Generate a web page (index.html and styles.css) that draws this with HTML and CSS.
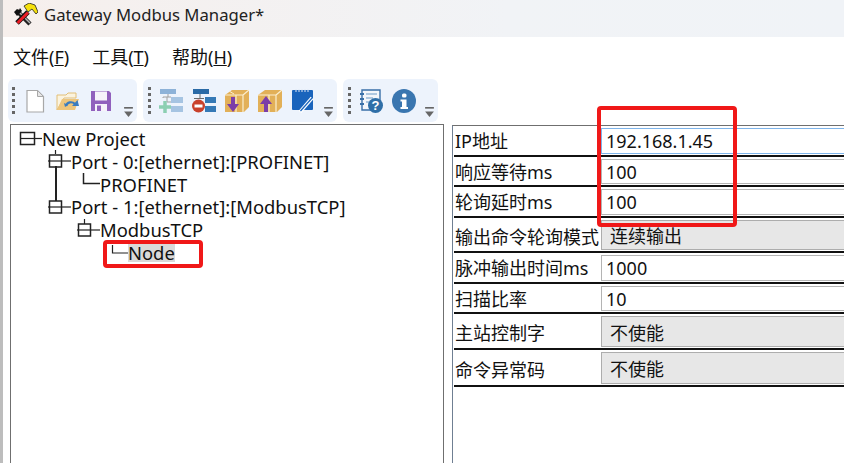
FILE: index.html
```html
<!DOCTYPE html>
<html lang="zh">
<head>
<meta charset="utf-8">
<title>Gateway Modbus Manager*</title>
<link rel="stylesheet" href="styles.css">
</head>
<body>
<div class="app">
  <header class="titlebar">
    <svg class="appicon" width="24" height="24" viewBox="0 0 24 24">
      <path d="M3 8L16 21" stroke="#222" stroke-width="4.500"/>
      <path d="M5 9L16 20" stroke="#b5b5b5" stroke-width="1.500"/>
      <path d="M0 9L3 6L5 7L6 5L8 8L3 13Z" fill="#111"/>
      <path d="M3 20L14 9" stroke="#111" stroke-width="5"/>
      <path d="M3.500 20L14 9.500" stroke="#ea1c24" stroke-width="3"/>
      <path d="M10 3L15 0L21 2L24 9L22 11L18 6L14 9Z" fill="#f5e00c" stroke="#222" stroke-width=".8"/>
    </svg>
    <span class="title">Gateway Modbus Manager*</span>
  </header>
  <nav class="menu">
    <span class="menu-item">文件(<u>F</u>)</span>
    <span class="menu-item">工具(<u>T</u>)</span>
    <span class="menu-item">帮助(<u>H</u>)</span>
  </nav>
  <div class="toolbars">
    <div class="toolbar tb1">
      <i class="grip"></i>
      <svg class="ic" viewBox="0 0 24 24"><path d="M4 1.500H14.500L20.500 7.500V23H4Z" fill="#fff" stroke="#a8a8a8" stroke-width="1.200"/><path d="M14.500 1.500V7.500H20.500Z" fill="#e6e6e6" stroke="#a8a8a8"/></svg>
      <svg class="ic" viewBox="0 0 24 24"><path d="M1 21V6H10L12 4H20V9H8L1 21Z" fill="#fbf3df" stroke="#e2bf78"/><path d="M1 21L6 10H23L19 21Z" fill="#eec67d"/><path d="M10 17C11 13 16 12 19 15" fill="none" stroke="#3a7cc0" stroke-width="2.200"/><path d="M16 17H23L21.500 11Z" fill="#3a7cc0"/><path d="M9 18L8 14L12 16Z" fill="#3a7cc0"/></svg>
      <svg class="ic" viewBox="0 0 24 24"><path d="M2 2H20L22 4V22H2Z" fill="#9160bd"/><rect x="6" y="2.500" width="12" height="9" fill="#f6f2fa"/><rect x="6" y="15" width="12" height="7" fill="#f6f2fa"/><rect x="8" y="16.500" width="4" height="5.500" fill="#9160bd"/></svg>
      <svg class="more" viewBox="0 0 10 10"><rect x="1" y="0" width="8" height="1.500" fill="#666"/><path d="M1 4H9L5 9Z" fill="#666"/></svg>
    </div>
    <div class="toolbar tb2">
      <i class="grip"></i>
      <svg class="ic" viewBox="0 0 24 24"><rect x="1" y="0" width="16" height="5" fill="#8db2d8"/><rect x="12" y="8" width="12" height="6" fill="#a6c4e2"/><rect x="12" y="17" width="12" height="6" fill="#a6c4e2"/><path d="M9 5V8M4 9V8H12M8 8V13H12" stroke="#a0a0a0" fill="none"/><path d="M6 12V24M0 18H12" stroke="#8ccfb2" stroke-width="3.500"/></svg>
      <svg class="ic" viewBox="0 0 24 24"><rect x="1" y="0" width="16" height="5" fill="#2a6aa6"/><rect x="13" y="8" width="12" height="6" fill="#3579b6"/><rect x="13" y="17" width="12" height="6" fill="#3579b6"/><path d="M8 5V10M2 9.500H12" stroke="#6a6a6a" fill="none"/><circle cx="6.500" cy="17" r="6.500" fill="#c9412c"/><rect x="2.500" y="15.500" width="8" height="3" fill="#fff"/></svg>
      <svg class="ic" viewBox="0 0 24 24"><path d="M0 6L7 1H24V18L19 23H0Z" fill="#e2b058"/><path d="M0 6H18V23M18 6L24 1M11 6V23" fill="none" stroke="#fbeecf" stroke-width="1.200"/><path d="M4 2L9 5" stroke="#fbeecf"/><path d="M8 8V17" stroke="#7b3ea8" stroke-width="4"/><path d="M2 15H14L8 23Z" fill="#7b3ea8"/></svg>
      <svg class="ic" viewBox="0 0 24 24"><path d="M0 6L7 1H24V18L19 23H0Z" fill="#e2b058"/><path d="M0 6H18V23M18 6L24 1M11 6V23" fill="none" stroke="#fbeecf" stroke-width="1.200"/><path d="M8 15V23" stroke="#7b3ea8" stroke-width="4"/><path d="M2 15H14L8 7Z" fill="#7b3ea8"/></svg>
      <svg class="ic" viewBox="0 0 24 24"><rect x="1" y="1" width="21" height="20" rx="1" fill="#1a64bc"/><path d="M5 0V3M8 0V3M11 0V3M14 0V3M17 0V3" stroke="#dfe8f5"/><path d="M9 23L21 9" stroke="#fff" stroke-width="3.500"/><path d="M9.500 22L21 9" stroke="#1a64bc" stroke-width="1.200"/></svg>
      <svg class="more" viewBox="0 0 10 10"><rect x="1" y="0" width="8" height="1.500" fill="#666"/><path d="M1 4H9L5 9Z" fill="#666"/></svg>
    </div>
    <div class="toolbar tb3">
      <i class="grip"></i>
      <svg class="ic" viewBox="0 0 24 24"><path d="M3 1H21V13H17V21H3Z" fill="#f4f6fa" stroke="#3a70a8" stroke-width="1.400"/><path d="M1 5H5M1 10H5M1 15H5" stroke="#3a70a8" stroke-width="2"/><path d="M7 5H18M7 9H14M7 13H11" stroke="#6a9ac6"/><circle cx="16.500" cy="16.500" r="7.500" fill="#2f6fa8"/><text class="qmark" x="16.500" y="21" text-anchor="middle">?</text></svg>
      <svg class="ic" viewBox="0 0 24 24"><circle cx="12" cy="12" r="12" fill="#3a76b0"/><rect x="10" y="4.500" width="4.500" height="4" rx="1.500" fill="#fff"/><path d="M8.500 10.500H14.500V18H16V20H8.500V18H10V12.500H8.500Z" fill="#fff"/></svg>
      <svg class="more" viewBox="0 0 10 10"><rect x="1" y="0" width="8" height="1.500" fill="#666"/><path d="M1 4H9L5 9Z" fill="#666"/></svg>
    </div>
  </div>
  <main class="panes">
    <section class="tree">
      <div class="node"><svg class="twig" viewBox="0 0 24 22"><rect x="2.500" y="5.500" width="14" height="12" fill="#fff" stroke="#222" stroke-width="1.500"/><path d="M2 11.500H24" stroke="#222" stroke-width="1.200"/></svg><span>New Project</span></div>
      <div class="node l1 trunk"><svg class="twig" viewBox="0 0 24 22"><path d="M8.500 0V4" stroke="#222" stroke-width="1.200"/><rect x="2.500" y="5" width="12" height="12" fill="#fff" stroke="#222" stroke-width="1.500"/><path d="M1 11H24" stroke="#222" stroke-width="1.200"/></svg><span>Port - 0:[ethernet]:[PROFINET]</span></div>
      <div class="node l2"><svg class="twig" viewBox="0 0 24 22"><path d="M7.500 0V10.500H24" fill="none" stroke="#222" stroke-width="1.500"/></svg><span>PROFINET</span></div>
      <div class="node l1"><svg class="twig" viewBox="0 0 24 22"><rect x="2.500" y="5" width="12" height="12" fill="#fff" stroke="#222" stroke-width="1.500"/><path d="M1 11H24" stroke="#222" stroke-width="1.200"/></svg><span>Port - 1:[ethernet]:[ModbusTCP]</span></div>
      <div class="node l2"><svg class="twig" viewBox="0 0 24 22"><path d="M8.500 0V5" stroke="#222" stroke-width="1.200"/><rect x="2.500" y="5" width="12" height="12" fill="#fff" stroke="#222" stroke-width="1.500"/><path d="M1 11H24" stroke="#222" stroke-width="1.200"/></svg><span>ModbusTCP</span></div>
      <div class="node l3"><svg class="twig" viewBox="0 0 24 22"><path d="M8.500 4V12H24" fill="none" stroke="#222" stroke-width="1.200"/></svg><span class="selected">Node</span></div>
      <div class="mark mark-node"></div>
    </section>
    <section class="props">
      <div class="prop h31"><label>IP地址</label><div class="val edit focus">192.168.1.45</div></div>
      <div class="prop h30"><label>响应等待ms</label><div class="val edit">100</div></div>
      <div class="prop h31"><label>轮询延时ms</label><div class="val edit">100</div></div>
      <div class="prop h35"><label>输出命令轮询模式</label><div class="val combo">连续输出</div></div>
      <div class="prop h31"><label>脉冲输出时间ms</label><div class="val edit">1000</div></div>
      <div class="prop h30"><label>扫描比率</label><div class="val edit">10</div></div>
      <div class="prop h36"><label>主站控制字</label><div class="val combo">不使能</div></div>
      <div class="prop h37"><label>命令异常码</label><div class="val combo">不使能</div></div>
    </section>
  </main>
  <div class="mark mark-values"></div>
</div>
</body>
</html>
```
FILE: styles.css
```css
* { box-sizing: border-box; }
html, body { margin: 0; height: 100%; overflow: hidden; }
body {
  background: #fff;
  color: #111;
  font-family: "Noto Sans", "Noto Sans CJK SC", sans-serif;
  font-size: 18px;
}
.app {
  position: relative;
  width: 844px;
  height: 463px;
  display: flex;
  flex-direction: column;
  border-left: 3px solid #bdbdbd;
}
.titlebar {
  height: 37px;
  display: flex;
  align-items: flex-start;
  padding-left: 11px;
  background: linear-gradient(90deg, #f6efec, #f1f3f6 60%, #f0f3f7);
}
.appicon { flex: none; margin-top: 3px; }
.title { font-size: 16.700px; line-height: 30px; color: #222; margin-left: 6px; }
.menu {
  height: 41px;
  display: flex;
  align-items: center;
  gap: 23px;
  padding: 0 0 3px 10px;
  font-size: 18px;
}
.toolbars {
  height: 46px;
  display: flex;
  gap: 6px;
  padding: 1px 0 0 5px;
}
.toolbar {
  height: 43px;
  display: flex;
  align-items: center;
  gap: 9px;
  background: #edf3fc;
  border-radius: 6px;
  position: relative;
  padding-left: 4px;
}
.tb1 { width: 129px; }
.tb2 { width: 194px; padding-left: 5px; }
.tb3 { width: 95px; padding-left: 5px; }
.grip {
  width: 3px;
  height: 28px;
  flex: none;
  margin-right: -1.500px;
  background: repeating-linear-gradient(#666 0 3px, transparent 3px 6px);
}
.ic { width: 24px; height: 24px; flex: none; margin-top: 1px; }
.more { position: absolute; right: 3px; bottom: 4px; width: 11px; height: 11px; }
.qmark { font: 700 13px "Liberation Sans", sans-serif; fill: #fff; }
.panes {
  flex: 1;
  display: flex;
  gap: 8px;
  padding-left: 7px;
  min-height: 0;
}
.tree {
  position: relative;
  width: 434px;
  border: 1px solid #6f6f6f;
  border-bottom: 0;
  padding: 2px 0 0 7px;
}
.node {
  position: relative;
  height: 22.800px;
  display: flex;
  align-items: center;
  font-size: 18.400px;
  white-space: nowrap;
}
.twig { width: 24px; height: 22px; flex: none; }
.l1 { padding-left: 29px; }
.l2 { padding-left: 58px; }
.l3 { padding-left: 86px; }
.trunk::after {
  content: "";
  position: absolute;
  left: 37px;
  top: 16px;
  width: 1.500px;
  height: 35px;
  background: #222;
}
.selected { background: #d9d9d9; line-height: 19px; }
.props {
  flex: 1;
  margin-top: 1px;
  border-left: 1px solid #6f7f92;
  border-top: 1px solid #6f6f6f;
  padding-left: 1px;
}
.prop {
  display: flex;
  border-bottom: 2px solid #111;
  padding-top: 2px;
}
.h30 { height: 30px; }
.h31 { height: 31px; }
.h35 { height: 35px; }
.h36 { height: 36px; }
.h37 { height: 37px; }
.prop label {
  width: 147px;
  padding: 0 0 0 1px;
  display: flex;
  align-items: center;
  font-size: 18px;
  white-space: nowrap;
}
.h30 label, .h31 label { padding-bottom: 3px; }
.val {
  flex: 1;
  display: flex;
  align-items: center;
  margin-bottom: 1px;
  font-size: 18px;
  border: 1px solid #b4b4b4;
  border-right: 0;
}
.edit { padding-left: 4px; background: #fff; }
.focus { border-color: #7eb4ea; }
.combo { padding-left: 8px; background: #e7e7e7; border-color: #adadad; }
.mark {
  position: absolute;
  border: 4px solid #f01818;
  border-radius: 4px;
  pointer-events: none;
}
.mark-values { left: 594px; top: 106px; width: 140px; height: 121px; }
.mark-node { left: 92px; top: 115px; width: 100px; height: 28px; }
```
